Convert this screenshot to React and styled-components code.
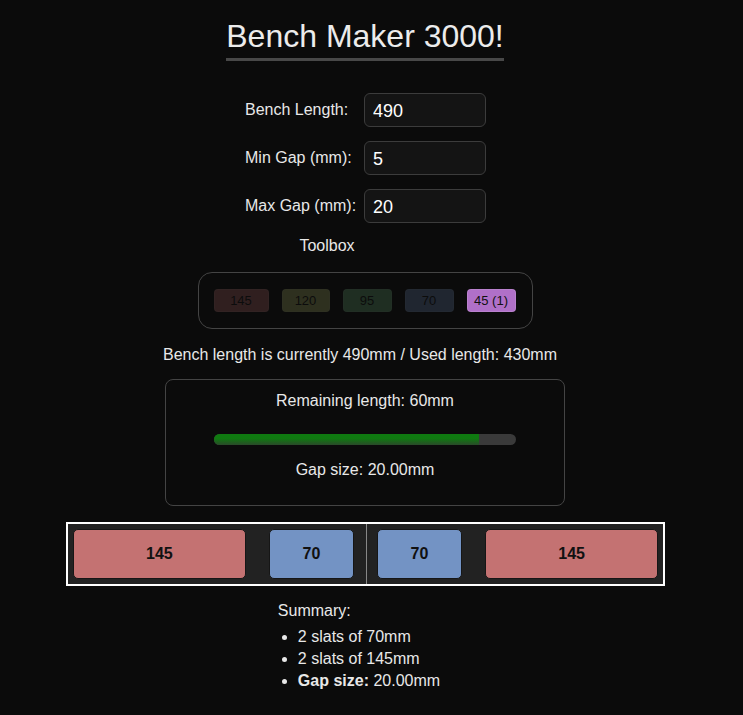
import React from 'react';
import styled, { createGlobalStyle } from 'styled-components';

const GlobalStyle = createGlobalStyle`
  body {
    margin: 0;
    background: #0b0b0b;
    color: #e8e8e8;
    font-family: "Liberation Sans", Arial, sans-serif;
  }
`;

const BENCH = 490;

const tools = [
  { size: 145, label: '145', color: '#c47272', width: 55, active: false },
  { size: 120, label: '120', color: '#b9c36e', width: 48, active: false },
  { size: 95, label: '95', color: '#6eb97d', width: 49, active: false },
  { size: 70, label: '70', color: '#7393c4', width: 49, active: false },
  { size: 45, label: '45 (1)', color: '#b070c8', width: 49, active: true },
];

const slats = [
  { size: 145, color: '#c47272' },
  { size: 70, color: '#7393c4' },
  { size: 70, color: '#7393c4' },
  { size: 145, color: '#c47272' },
];

const Page = styled.div`
  width: 730px;
  display: flex;
  flex-direction: column;
  align-items: center;
`;

const Title = styled.h1`
  margin: 18px 0 0;
  padding-bottom: 3px;
  font-size: 32px;
  font-weight: normal;
  color: #ececec;
  border-bottom: 3px solid #484848;
`;

const Form = styled.div`
  margin-top: 32px;
  display: grid;
  grid-template-columns: 112px 122px;
  column-gap: 7px;
  row-gap: 14px;
  align-items: center;
  margin-left: 1px;
`;

const Label = styled.label`
  font-size: 16px;
  color: #e8e8e8;
`;

const Input = styled.input`
  box-sizing: border-box;
  width: 122px;
  height: 34px;
  padding: 2px 8px 0;
  background: #141414;
  border: 1px solid #3c3c3c;
  border-radius: 6px;
  color: #fff;
  font-family: inherit;
  font-size: 18px;
  outline: none;
`;

const ToolboxLabel = styled.div`
  margin: 14px 76px 0 0;
  font-size: 16px;
`;

const Toolbox = styled.div`
  margin-top: 17px;
  display: flex;
  gap: 13px;
  padding: 16px 16px 16px 15px;
  border: 1px solid #444;
  border-radius: 14px;
`;

const Tool = styled.button`
  box-sizing: border-box;
  width: ${(p) => p.$w}px;
  height: 23px;
  padding: 0;
  border-radius: 4px;
  border: 1px solid rgba(255, 255, 255, 0.12);
  background: ${(p) => p.$color};
  opacity: ${(p) => (p.$active ? 1 : 0.2)};
  color: #111;
  font-family: inherit;
  font-size: 13px;
`;

const Status = styled.div`
  margin: 17px 10px 0 0;
  font-size: 16px;
`;

const Panel = styled.div`
  box-sizing: border-box;
  margin-top: 15px;
  width: 400px;
  padding: 12px 0 26px;
  border: 1px solid #444;
  border-radius: 8px;
  display: flex;
  flex-direction: column;
  align-items: center;
  font-size: 16px;
`;

const Track = styled.div`
  margin: 24px 0 16px;
  width: 302px;
  height: 11px;
  border-radius: 6px;
  background: #3a3a3a;
  overflow: hidden;
`;

const Fill = styled.div`
  height: 100%;
  background: linear-gradient(#0f7a10 40%, #2a4a2a);
`;

const Bench = styled.div`
  position: relative;
  box-sizing: border-box;
  margin: 16px 0 0 1px;
  width: 599px;
  padding: 5px;
  border: 2px solid #fff;
  background: #222;
  display: flex;
`;

const Slat = styled.div`
  flex: ${(p) => p.$size} 1 0;
  height: 50px;
  box-sizing: border-box;
  border: 1px solid #161616;
  border-radius: 5px;
  background: ${(p) => p.$color};
  display: flex;
  align-items: center;
  justify-content: center;
  color: #111;
  font-weight: bold;
  font-size: 16px;
`;

const Spacer = styled.div`
  flex: ${(p) => p.$size} 1 0;
`;

const CenterLine = styled.div`
  position: absolute;
  top: 0;
  bottom: 0;
  left: 50%;
  width: 1px;
  background: #888;
`;

const Summary = styled.div`
  margin: 16px 12px 0 0;
  font-size: 16px;
`;

const List = styled.ul`
  margin: 6px 0 0;
  padding-left: 20px;
  line-height: 22px;
`;

export default function App() {
  const gap = 20;
  const used = slats.reduce((s, x) => s + x.size, 0);
  const remaining = BENCH - used;
  return (
    <Page>
      <GlobalStyle />
      <Title>Bench Maker 3000!</Title>
      <Form>
        <Label>Bench Length:</Label>
        <Input defaultValue="490" />
        <Label>Min Gap (mm):</Label>
        <Input defaultValue="5" />
        <Label>Max Gap (mm):</Label>
        <Input defaultValue="20" />
      </Form>
      <ToolboxLabel>Toolbox</ToolboxLabel>
      <Toolbox>
        {tools.map((t) => (
          <Tool key={t.size} $w={t.width} $color={t.color} $active={t.active}>
            {t.label}
          </Tool>
        ))}
      </Toolbox>
      <Status>
        Bench length is currently {BENCH}mm / Used length: {used}mm
      </Status>
      <Panel>
        <div>Remaining length: {remaining}mm</div>
        <Track>
          <Fill style={{ width: `${(used / BENCH) * 100}%` }} />
        </Track>
        <div>Gap size: {gap.toFixed(2)}mm</div>
      </Panel>
      <Bench>
        {slats.map((s, i) => (
          <React.Fragment key={i}>
            {i > 0 && <Spacer $size={gap} />}
            <Slat $size={s.size} $color={s.color}>{s.size}</Slat>
          </React.Fragment>
        ))}
        <CenterLine />
      </Bench>
      <Summary>
        Summary:
        <List>
          <li>2 slats of 70mm</li>
          <li>2 slats of 145mm</li>
          <li><b>Gap size:</b> {gap.toFixed(2)}mm</li>
        </List>
      </Summary>
    </Page>
  );
}
